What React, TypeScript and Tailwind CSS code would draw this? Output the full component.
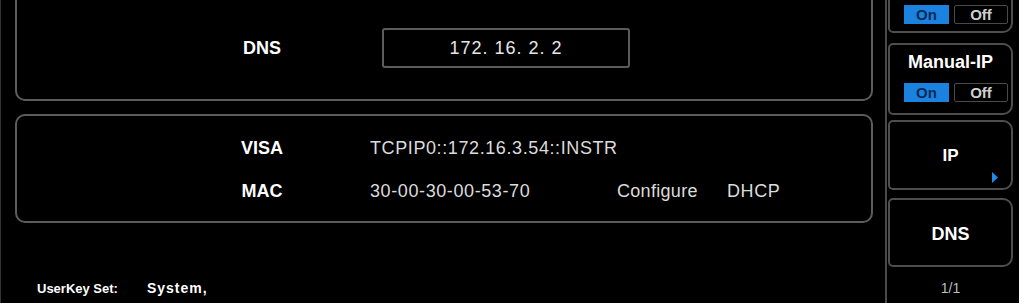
import React from "react";

const font = { fontFamily: '"Liberation Sans", Arial, sans-serif' };

function Toggle() {
  return (
    <div className="flex gap-[5px] pl-[14px]">
      <div className="w-[45px] h-[19px] bg-[#1c82e0] flex items-center justify-center text-[15px] font-bold text-[#062a55] leading-none">
        On
      </div>
      <div className="w-[54px] h-[19px] border border-[#4a4a4a] rounded-[2px] flex items-center justify-center text-[15px] font-bold text-[#cfcfcf] leading-none">
        Off
      </div>
    </div>
  );
}

export default function App() {
  return (
    <div className="w-[1024px] h-[307px] bg-white overflow-hidden" style={font}>
      <div className="w-[1019px] h-[303px] bg-black flex overflow-hidden border-l border-[#333333]">
        {/* Left main area */}
        <div className="w-[884px] h-full flex flex-col relative">
          {/* Top panel */}
          <div className="ml-[14px] mt-[-20px] w-[858px] h-[121px] border-2 border-[#5c5c5c] rounded-[10px] shrink-0">
            <div className="flex items-center pt-[46px] pl-[205px]">
              <div className="w-[80px] text-center text-white font-bold text-[18px]">DNS</div>
              <div className="ml-[80px] w-[248px] h-[40px] border-2 border-[#5c5c5c] rounded-[3px] flex items-center justify-center text-[#e6e6e6] text-[18px] tracking-[1px]">
                172. 16. 2. 2
              </div>
            </div>
          </div>
          {/* Second panel */}
          <div className="ml-[14px] mt-[13px] w-[858px] h-[109px] border-2 border-[#5c5c5c] rounded-[10px] shrink-0">
            <div className="flex items-center pt-[21px] pl-[205px] h-[22px] box-content">
              <div className="w-[80px] text-center text-white font-bold text-[18px]">VISA</div>
              <div className="ml-[68px] text-[#dcdcdc] text-[18px] tracking-[0.6px]">TCPIP0::172.16.3.54::INSTR</div>
            </div>
            <div className="flex items-center pt-[21px] pl-[205px] h-[22px] box-content">
              <div className="w-[80px] text-center text-white font-bold text-[18px]">MAC</div>
              <div className="ml-[68px] w-[247px] text-[#dcdcdc] text-[18px] tracking-[0.6px]">30-00-30-00-53-70</div>
              <div className="w-[110px] text-[#dcdcdc] text-[18px] tracking-[0.3px]">Configure</div>
              <div className="text-[#dcdcdc] text-[18px] tracking-[0.6px]">DHCP</div>
            </div>
          </div>
          {/* Bottom status */}
          <div className="mt-auto mb-[4px] ml-[36px] flex items-baseline text-white font-bold">
            <span className="text-[13px]">UserKey Set:</span>
            <span className="ml-[29px] text-[14px] tracking-[1px]">System,</span>
          </div>
        </div>
        {/* Divider */}
        <div className="w-[2px] h-full bg-[#4a4a4a] shrink-0" />
        {/* Sidebar */}
        <div className="flex-1 flex flex-col pl-[1px]">
          <div className="mt-[-40px] w-[125px] h-[73px] border-2 border-[#4e4e4e] rounded-l-[5px] rounded-r-[10px] flex flex-col justify-end pb-[7px] shrink-0">
            <Toggle />
          </div>
          <div className="mt-[10px] w-[125px] h-[72px] border-2 border-[#4e4e4e] rounded-l-[5px] rounded-r-[10px] flex flex-col shrink-0">
            <div className="pt-[7px] text-center text-white font-bold text-[18px] leading-[20px]">Manual-IP</div>
            <div className="mt-[11px]">
              <Toggle />
            </div>
          </div>
          <div className="mt-[5px] w-[125px] h-[70px] border-2 border-[#4e4e4e] rounded-l-[5px] rounded-r-[10px] flex items-center justify-center relative shrink-0">
            <span className="text-white font-bold text-[17px] mt-[2px]">IP</span>
            <svg className="absolute right-[13px] bottom-[5px]" width="6" height="11" viewBox="0 0 6 11">
              <polygon points="0,0 6,5.5 0,11" fill="#1e8ce6" />
            </svg>
          </div>
          <div className="mt-[8px] w-[125px] h-[69px] border-2 border-[#4e4e4e] rounded-l-[5px] rounded-r-[10px] flex items-center justify-center shrink-0">
            <span className="text-white font-bold text-[18px] mt-[4px]">DNS</span>
          </div>
          <div className="w-[125px] mt-[11px] text-center text-[#bdbdbd] text-[14px]">1/1</div>
        </div>
      </div>
    </div>
  );
}
